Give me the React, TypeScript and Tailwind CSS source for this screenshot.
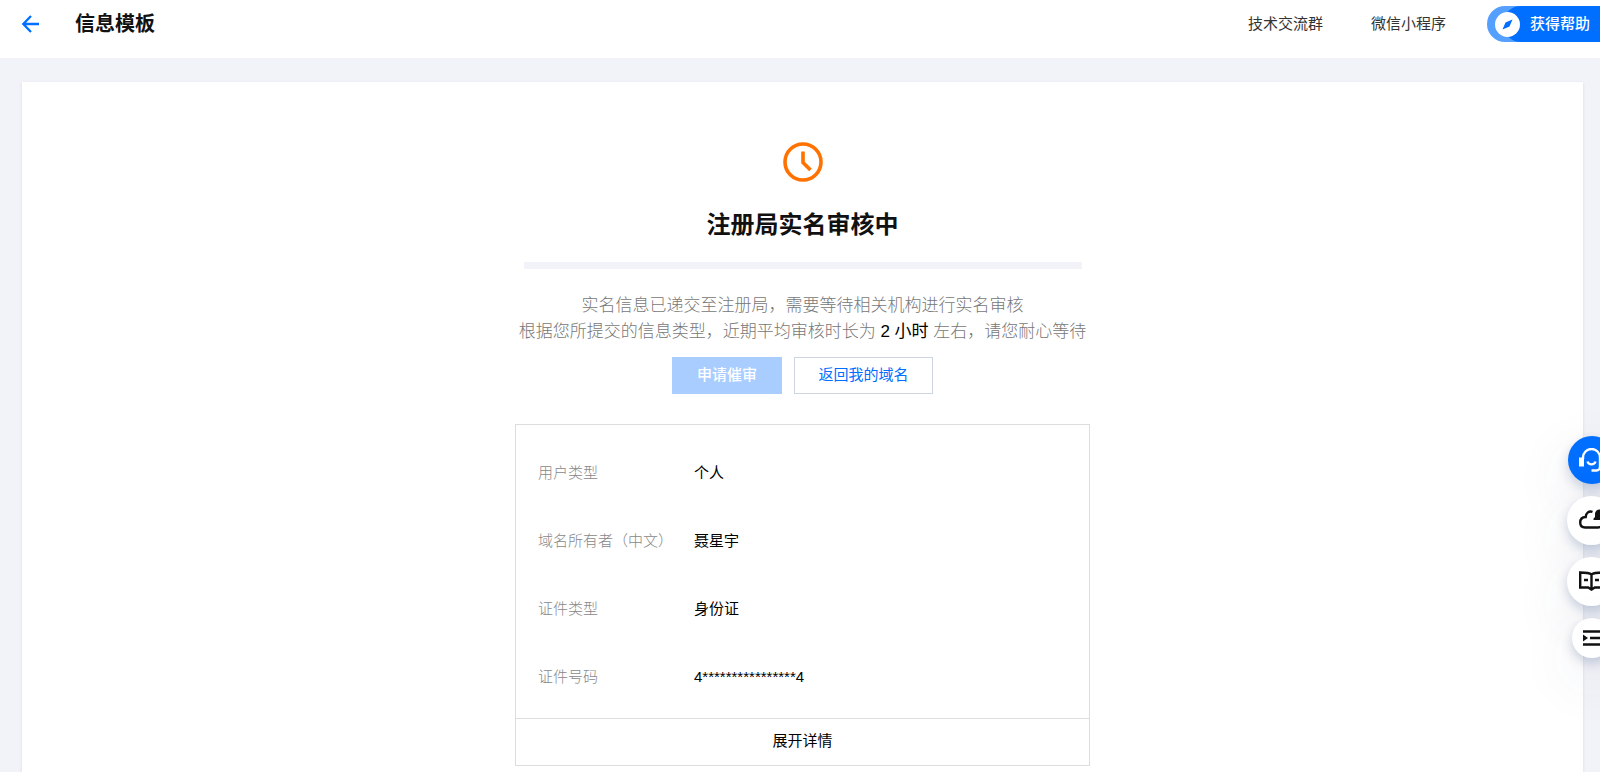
import type { ReactNode } from "react";

type Detail = {
  label: string;
  value: string;
};

const NAV_LINKS = ["技术交流群", "微信小程序"];

const DETAILS: Detail[] = [
  { label: "用户类型", value: "个人" },
  { label: "域名所有者（中文）", value: "聂星宇" },
  { label: "证件类型", value: "身份证" },
  { label: "证件号码", value: "4****************4" },
];

export default function App() {
  return (
    <div className="flex min-h-screen flex-col bg-[#f2f3f8] font-['Liberation_Sans','Noto_Sans_CJK_SC',sans-serif] text-[15px] leading-5 text-black">
      <PageHeader />
      <main className="mt-6 mr-[17px] ml-[22px] flex flex-1 flex-col items-center bg-white px-4 pt-[60px] pb-1 shadow-[0_1px_3px_rgba(54,58,80,0.12)]">
        <ClockIcon />
        <h1 className="mt-[25px] text-2xl leading-9 font-bold text-[#111]">
          注册局实名审核中
        </h1>
        <div className="mt-[19px] h-[7px] w-full max-w-[558px] bg-[#f2f3f8]" />
        <p className="mt-6 text-center text-[17px] leading-[26px] font-light text-[#777]">
          实名信息已递交至注册局，需要等待相关机构进行实名审核
          <br />
          根据您所提交的信息类型，近期平均审核时长为{" "}
          <span className="font-normal text-black">2 小时</span>{" "}
          左右，请您耐心等待
        </p>
        <div className="mt-3 flex gap-3">
          <button
            type="button"
            disabled
            className="h-[37px] w-[110px] bg-[#a9cdff] pb-0.5 font-medium text-white"
          >
            申请催审
          </button>
          <button
            type="button"
            className="h-[37px] w-[139px] border border-[#cfd5de] bg-white pb-0.5 text-[#006eff]"
          >
            返回我的域名
          </button>
        </div>
        <DetailPanel items={DETAILS} />
      </main>
      <FloatingTools />
    </div>
  );
}

function PageHeader() {
  return (
    <header className="flex items-center bg-white pt-1.5 pb-4 pl-[21px]">
      <button type="button" aria-label="返回">
        <svg
          className="size-[19px]"
          viewBox="0 0 19 19"
          fill="none"
          stroke="#006eff"
          strokeWidth="2.3"
        >
          <path d="M10 1 2.300 9 10 17M2.500 9H18" />
        </svg>
      </button>
      <h2 className="ml-[35px] text-xl leading-7 font-bold text-[#111]">
        信息模板
      </h2>
      <nav className="ml-auto flex gap-12">
        {NAV_LINKS.map((link) => (
          <a className="text-[#333]" href="#" key={link}>
            {link}
          </a>
        ))}
      </nav>
      <button
        type="button"
        className="ml-[41px] h-9 rounded-l-full bg-[#559fff] pl-4 font-medium text-white"
      >
        <span className="flex h-9 items-center rounded-l-full bg-[#006eff] pr-2.5">
          <span className="-ml-2 flex size-[25px] items-center justify-center rounded-full bg-white">
            <svg className="size-[11px]" viewBox="0 0 11 11" fill="#006eff">
              <path d="M10.500.500 7.500 7.500.500 10.500 3.500 3.500Z" />
            </svg>
          </span>
          <span className="ml-2.5">获得帮助</span>
        </span>
      </button>
    </header>
  );
}

function DetailPanel({ items }: { items: Detail[] }) {
  return (
    <section className="mt-[30px] w-full max-w-[575px] border border-[#ddd]">
      <dl className="pt-3.5 pb-[7px]">
        {items.map((item) => (
          <div className="flex h-17 items-center px-[22px]" key={item.label}>
            <dt className="w-[156px] font-light text-[#888]">{item.label}</dt>
            <dd>{item.value}</dd>
          </div>
        ))}
      </dl>
      <button
        type="button"
        className="h-[47px] w-full border-t border-[#ddd] pb-0.5"
      >
        展开详情
      </button>
    </section>
  );
}

function ClockIcon() {
  return (
    <svg
      className="size-10"
      viewBox="0 0 40 40"
      fill="none"
      stroke="#ff7200"
      strokeWidth="3.6"
    >
      <circle cx="20" cy="20" r="18" />
      <path d="M20 9.500V20.500L27.500 28" />
    </svg>
  );
}

// The tools dock against the window's right edge and are partly tucked behind it.
function FloatingTools() {
  return (
    <aside className="fixed top-[436px] -right-4 flex flex-col items-center gap-3">
      <ToolButton label="在线客服" className="size-12 bg-[#006eff] text-white">
        <path d="M4 11V9.500a8.500 8.500 0 0 1 17 0V19a3.500 3.500 0 0 1-3.500 3.500H12.500" />
        <path d="M8.500 13.500a4.200 4.200 0 0 0 8 0" />
        <path d="M0 9.500H5v9H0ZM20 9.500h5v9H20Z" fill="currentColor" stroke="none" />
      </ToolButton>
      <ToolButton label="云消息" className="size-[49px] bg-white text-[#111]">
        <path d="M13.500 3.800C10 2.500 7 5 6.700 9 3 9.200 1.200 11.500 1.200 14.500c0 3 2 5 5 5H19c3 0 5-1.500 5-4.500" />
        <path d="M14.500 12V10.500l1.500-1.500V6a4.500 4.500 0 0 1 9 0v6Z" fill="currentColor" stroke="none" />
      </ToolButton>
      <ToolButton label="文档" className="size-[49px] bg-white text-[#111]">
        <path d="M12.500 5.500C10.500 3.800 8 3.500 1.200 3.500V18.500h8l3.300 2 3.300-2h8V3.500c-6.800 0-9.300.300-11.300 2ZM12.500 5.500V21.500M5 11h4M16 11h4" />
      </ToolButton>
      <ToolButton label="收起" className="size-10 bg-white text-[#111]">
        <path d="M4 5.500H21M11 12H21M4 18.500H21" />
        <path d="M4 8.500 9 12 4 15.500Z" fill="currentColor" stroke="none" />
      </ToolButton>
    </aside>
  );
}

function ToolButton({
  label,
  className,
  children,
}: {
  label: string;
  className: string;
  children: ReactNode;
}) {
  return (
    <button
      type="button"
      aria-label={label}
      className={`flex items-center justify-center rounded-full shadow-[0_5px_12px_rgba(40,70,120,0.24),0_20px_60px_rgba(40,70,120,0.12)] ${className}`}
    >
      <svg
        className="size-[25px]"
        viewBox="0 0 25 25"
        fill="none"
        stroke="currentColor"
        strokeWidth="2.4"
      >
        {children}
      </svg>
    </button>
  );
}
